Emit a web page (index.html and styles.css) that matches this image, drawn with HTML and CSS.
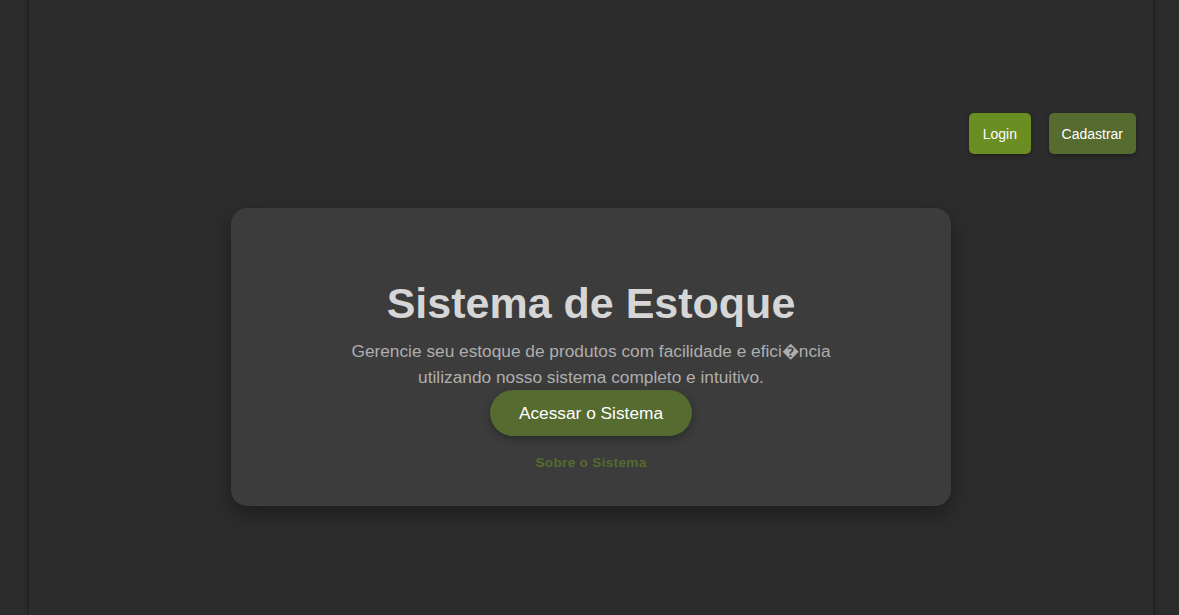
FILE: index.html
```html
<!DOCTYPE html>
<html lang="pt-BR">
<head>
<meta charset="utf-8">
<title>Sistema de Estoque</title>
<link rel="stylesheet" href="styles.css">
</head>
<body>
<div class="page">
  <header class="topbar">
    <a class="btn btn-login" href="#">Login</a>
    <a class="btn btn-register" href="#">Cadastrar</a>
  </header>
  <main class="hero">
    <section class="card">
      <h1 class="title">Sistema de Estoque</h1>
      <p class="lead">Gerencie seu estoque de produtos com facilidade e efici&#xFFFD;ncia utilizando nosso sistema completo e intuitivo.</p>
      <a class="cta" href="#">Acessar o Sistema</a>
      <a class="about" href="#">Sobre o Sistema</a>
    </section>
  </main>
</div>
</body>
</html>
```
FILE: styles.css
```css
html, body {
  margin: 0;
  padding: 0;
  height: 100%;
}
body {
  background: #2b2b2b;
  font-family: "Liberation Sans", Arial, sans-serif;
  overflow: hidden;
}
.page {
  width: 1124px;
  margin: 0 0 0 29px;
  min-height: 100%;
  background: #2c2c2c;
  box-shadow: 0 0 3px 1px rgba(0, 0, 0, 0.35);
  display: flex;
  flex-direction: column;
}
.topbar {
  display: flex;
  justify-content: flex-end;
  gap: 18px;
  padding: 113px 17px 0 0;
}
.btn {
  display: block;
  color: #ffffff;
  text-decoration: none;
  font-size: 14px;
  line-height: 16px;
  padding: 12.5px 13px;
  border-radius: 5px;
  box-shadow: 0 2px 5px rgba(0, 0, 0, 0.3);
}
.btn-login {
  background: #6b8e23;
  padding-left: 13.5px;
  padding-right: 13.5px;
}
.btn-register {
  background: #556b2f;
}
.hero {
  display: flex;
  justify-content: center;
  padding-top: 54px;
}
.card {
  width: 720px;
  box-sizing: border-box;
  background: #3c3c3c;
  border-radius: 16px;
  padding: 71px 0 35px;
  display: flex;
  flex-direction: column;
  align-items: center;
  box-shadow: 0 8px 20px rgba(0, 0, 0, 0.35);
}
.title {
  margin: 0 0 10px;
  font-size: 43px;
  line-height: 49px;
  font-weight: bold;
  color: #d6d6d6;
}
.lead {
  margin: 0;
  max-width: 500px;
  text-align: center;
  font-size: 17.3px;
  line-height: 26px;
  color: #aeaeae;
}
.cta {
  display: block;
  background: #556b2f;
  color: #ffffff;
  text-decoration: none;
  font-size: 17.3px;
  line-height: 20px;
  padding: 13px 28.5px;
  border-radius: 24px;
  box-shadow: 0 3px 8px rgba(0, 0, 0, 0.3);
}
.about {
  display: block;
  margin-top: 19px;
  color: #556b2f;
  text-decoration: none;
  font-size: 13.6px;
  line-height: 16px;
  font-weight: bold;
  letter-spacing: 0.3px;
}
```
